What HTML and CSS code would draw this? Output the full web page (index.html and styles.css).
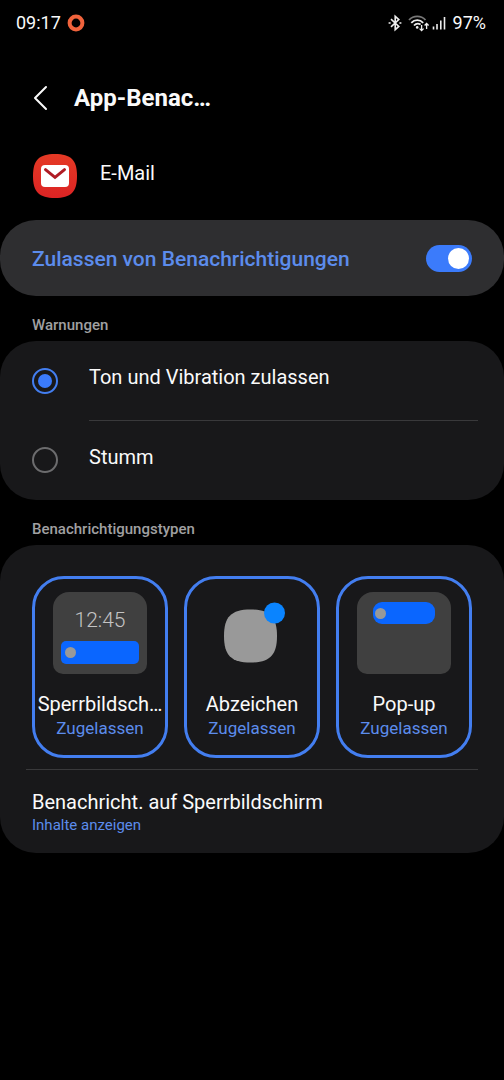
FILE: index.html
```html
<!DOCTYPE html>
<html lang="de">
<head>
<meta charset="utf-8">
<meta name="viewport" content="width=device-width, initial-scale=1">
<title>App-Benachrichtigungen</title>
<link rel="stylesheet" href="styles.css">
</head>
<body>
<div class="status-bar">
  <span class="status-time">09:17</span>
  <svg class="ring-icon" viewBox="0 0 18 18" aria-hidden="true"><circle cx="9" cy="9" r="6.4"/></svg>
  <div class="status-right">
    <svg class="bt-icon" viewBox="0 0 14 18" aria-hidden="true">
      <path d="M3 5.200 10.800 12.400 7.200 15.600V2.400L10.800 5.600 3 12.800"/>
      <path d="M.6 9h2M11.400 9h2"/>
    </svg>
    <svg class="wifi-icon" viewBox="0 0 22 18" aria-hidden="true">
      <path class="wifi-dim" d="M1 6C5.500 1.200 13 1.200 17.500 6"/>
      <path d="M3.300 8.800C6.700 5.200 11.800 5.200 15.200 8.800M6 11.500C7.800 9.500 10.400 9.100 12.600 10.600"/>
      <circle class="wifi-dot" cx="9.200" cy="13.400" r="1.300"/>
      <path class="wifi-arrows" d="M13.600 11V16.500M11.600 14.600l2 2 2-2M18.600 15V9.500M16.600 11.500l2-2 2 2"/>
    </svg>
    <svg class="signal-icon" viewBox="0 0 14 16" aria-hidden="true">
      <path d="M1.500 11.500v3M5 9v5.500M8.800 5.500v9M12.500 2v12.500"/>
    </svg>
    <span class="battery">97%</span>
  </div>
</div>

<header class="header">
  <button class="back" type="button" aria-label="Zurück">
    <svg viewBox="0 0 16 26" aria-hidden="true"><path d="M14 2 3 13l11 11"/></svg>
  </button>
  <h1 class="title">App-Benac…</h1>
</header>

<main>
  <div class="app">
    <svg class="app-icon" viewBox="0 0 44 44" aria-hidden="true">
      <defs><linearGradient id="mail-red" x1="0" y1="0" x2="0" y2="1"><stop offset="0" stop-color="#e53a25"/><stop offset="1" stop-color="#dc2424"/></linearGradient></defs>
      <path fill="url(#mail-red)" d="M22 0C38 0 44 6 44 22S38 44 22 44 0 38 0 22 6 0 22 0Z"/>
      <rect x="8" y="11" width="28" height="22" rx="4" fill="#fff"/>
      <path class="mail-flap" d="M12.500 15.600 22 23.400l9.500-7.800"/>
    </svg>
    <span class="app-name">E-Mail</span>
  </div>

  <label class="card allow">
    <span class="allow-text">Zulassen von Benachrichtigungen</span>
    <input class="switch" type="checkbox" role="switch" checked>
  </label>

  <h2 class="section" id="alerts">Warnungen</h2>
  <div class="card" role="radiogroup" aria-labelledby="alerts">
    <label class="option">
      <input class="radio" type="radio" name="alert" checked>
      <span class="option-text">Ton und Vibration zulassen</span>
    </label>
    <label class="option">
      <input class="radio" type="radio" name="alert">
      <span class="option-text">Stumm</span>
    </label>
  </div>

  <h2 class="section">Benachrichtigungstypen</h2>
  <div class="card types">
    <div class="tiles">
      <button class="tile" type="button" aria-pressed="true">
        <span class="preview lock">
          <span class="clock">12:45</span>
          <span class="notice"></span>
        </span>
        <span class="tile-name">Sperrbildsch…</span>
        <span class="tile-state">Zugelassen</span>
      </button>
      <button class="tile" type="button" aria-pressed="true">
        <svg class="badge" viewBox="0 0 94 82" aria-hidden="true">
          <path fill="#999" d="M45.500 17.500C65 17.500 72 25 72 44S65 70.500 45.500 70.500 19 63 19 44 26 17.500 45.500 17.500Z"/>
          <circle cx="69.500" cy="21" r="10.500" fill="#0a84ff"/>
        </svg>
        <span class="tile-name">Abzeichen</span>
        <span class="tile-state">Zugelassen</span>
      </button>
      <button class="tile" type="button" aria-pressed="true">
        <span class="preview popup">
          <span class="notice"></span>
        </span>
        <span class="tile-name">Pop-up</span>
        <span class="tile-state">Zugelassen</span>
      </button>
    </div>
    <button class="lock-row" type="button">
      <span class="lock-name">Benachricht. auf Sperrbildschirm</span>
      <span class="lock-state">Inhalte anzeigen</span>
    </button>
  </div>
</main>
</body>
</html>
```
FILE: styles.css
```css
* { box-sizing: border-box; }

body {
  margin: 0;
  min-height: 100vh;
  background: #000;
  color: #fafafa;
  font-family: Roboto, "Liberation Sans", sans-serif;
  font-size: 20px;
  line-height: 24px;
}

button {
  padding: 0;
  border: 0;
  background: none;
  color: inherit;
  font: inherit;
}

svg { display: block; fill: none; }

/* Status bar */
.status-bar {
  display: flex;
  align-items: center;
  height: 46px;
  padding: 0 18px 0 16px;
  font-size: 18px;
}
.ring-icon { width: 18px; height: 18px; margin-left: 6px; stroke: #f0633c; stroke-width: 4; }
.status-right { display: flex; align-items: center; margin-left: auto; }
.bt-icon { width: 14px; height: 18px; stroke: #eee; stroke-width: 1.6; }
.wifi-icon { width: 22px; height: 18px; margin-left: 6px; stroke: #eee; stroke-width: 1.8; }
.wifi-dim { stroke: #777; }
.wifi-dot { fill: #eee; stroke: none; }
.wifi-arrows { stroke-width: 1.3; }
.signal-icon { width: 14px; height: 16px; margin-left: 2px; stroke: #eee; stroke-width: 1.6; }
.battery { margin-left: 7px; }

/* Header */
.header {
  display: flex;
  align-items: center;
  height: 104px;
  padding: 0 32px;
}
.back svg { width: 16px; height: 26px; stroke: #fafafa; stroke-width: 2; stroke-linecap: round; stroke-linejoin: round; }
.title { margin: 0 0 0 26px; font-size: 24px; font-weight: 700; line-height: 32px; }

.app { display: flex; align-items: center; gap: 23px; padding: 4px 33px 22px; }
.app-icon { width: 44px; height: 44px; }
.mail-flap { stroke: #b01c24; stroke-width: 3; stroke-linecap: round; }
.app-name { padding-bottom: 6px; }

/* Cards */
.card { display: block; border-radius: 36px; background: #18181a; }

.allow {
  display: flex;
  align-items: center;
  justify-content: space-between;
  height: 76px;
  padding: 0 32px;
  background: #2e2e30;
}
.allow-text { padding-top: 2px; color: #5c8cec; font-size: 21px; font-weight: 500; }
.switch {
  display: flex;
  align-items: center;
  justify-content: flex-end;
  appearance: none;
  width: 46px;
  height: 27px;
  margin: 0;
  padding: 3px;
  border-radius: 14px;
  background: #3b7bfb;
}
.switch::before { content: ""; width: 21px; height: 21px; border-radius: 50%; background: #fff; }
.switch:not(:checked) { justify-content: flex-start; background: #6a6a6c; }

.section {
  margin: 0;
  padding: 19px 32px 6px;
  color: #a0a0a2;
  font-size: 15px;
  font-weight: 500;
  line-height: 20px;
}

.option {
  display: grid;
  grid-template-columns: 57px 1fr;
  align-items: center;
  padding: 0 26px 0 32px;
}
.radio {
  display: grid;
  place-items: center;
  appearance: none;
  width: 26px;
  height: 26px;
  margin: 0;
  border: 2px solid #6c6c6e;
  border-radius: 50%;
}
.radio:checked { border-color: #437ef0; }
.radio:checked::before { content: ""; width: 14px; height: 14px; border-radius: 50%; background: #3b7bfb; }
.option-text { padding: 24px 0 31px; }
.option + .option .option-text { border-top: 1px solid #39393b; }

/* Notification types */
.types { padding: 31px 26px 0; }
.tiles {
  display: grid;
  grid-template-columns: repeat(3, 1fr);
  gap: 16px;
  padding: 0 6px 11px;
  border-bottom: 1px solid #39393b;
}
.tile {
  display: flex;
  flex-direction: column;
  align-items: center;
  min-width: 0;
  padding: 13px 0 15px;
  border: 3px solid #437ef0;
  border-radius: 32px;
}
.preview, .badge { width: 94px; height: 82px; margin-bottom: 18px; }
.preview {
  display: flex;
  flex-direction: column;
  align-items: center;
  border-radius: 16px 16px 10px 10px;
  background: #404040;
}
.clock { padding: 16px 0 9px; color: #c4c4c4; font-size: 21px; font-weight: 300; }
.notice {
  display: flex;
  align-items: center;
  width: 78px;
  height: 23px;
  padding-left: 4px;
  border-radius: 5px;
  background: #0a66ff;
}
.notice::before { content: ""; width: 11px; height: 11px; border-radius: 50%; background: #999; }
.popup { padding-top: 10px; }
.popup .notice { width: 62px; height: 22px; padding-left: 2px; border-radius: 9px; }
.tile-name { white-space: nowrap; }
.tile-state { color: #5c8cec; font-size: 17px; }

.lock-row {
  display: flex;
  flex-direction: column;
  width: 100%;
  padding: 20px 6px 17px;
  text-align: left;
}
.lock-state { color: #5c8cec; font-size: 15px; line-height: 22px; }
```
